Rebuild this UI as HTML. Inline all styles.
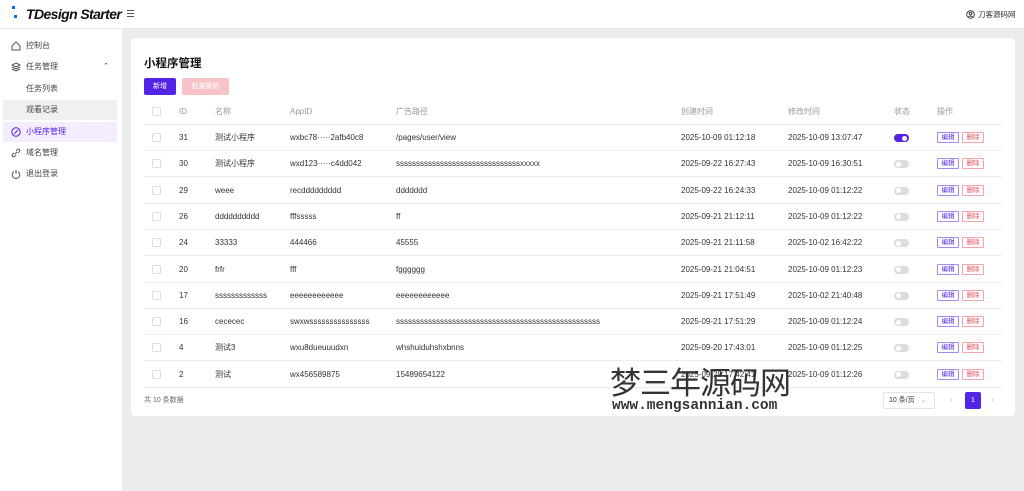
<!DOCTYPE html>
<html><head><meta charset="utf-8"><style>
*{box-sizing:border-box;margin:0;padding:0}
body{width:1024px;height:491px;overflow:hidden;background:#ececec;font-family:"Liberation Sans","Noto Sans CJK SC",sans-serif;font-size:8px;color:#333;position:relative}
.hdr{position:absolute;left:0;top:0;width:1024px;height:29px;background:#fff;border-bottom:1px solid #e7e7e7}
.logo{position:absolute;left:26px;top:6px;font-size:14px;line-height:16px;font-style:italic;font-weight:bold;color:#111;letter-spacing:-0.6px}
.dot{position:absolute;width:3px;height:3px;background:#0a6cff}
.side{position:absolute;left:0;top:29px;width:122px;height:462px;background:#fff}
.mi{position:absolute;left:3px;width:114px;height:20px;line-height:20px;padding-left:23px;font-size:8px;color:#444}
.mi svg{position:absolute;left:8px;top:5px}
.card{position:absolute;left:131px;top:38px;width:884px;height:378px;background:#fff;border-radius:4px}
.cell{position:absolute;font-size:8px;line-height:10px;height:10px;color:#333;white-space:nowrap}
.th{color:#999}
.line{position:absolute;left:144px;width:858px;height:1px;background:#ececec}
.cb{position:absolute;left:152px;width:9px;height:9px;border:1px solid #ddd;border-radius:2px}
.btn{position:absolute;height:11px;width:22px;font-size:6.5px;line-height:9px;text-align:center;border:1px solid;border-radius:1px}
.sw{position:absolute;left:894px;width:15px;height:8px;border-radius:4px;background:#ddd}
.sw i{position:absolute;top:1.5px;left:2px;width:5px;height:5px;border-radius:50%;background:#fff}
</style></head><body>
<div class="hdr">
<div class="dot" style="left:12px;top:6px"></div><div class="dot" style="left:14px;top:15px"></div>
<div class="logo">TDesign Starter</div>
<div style="position:absolute;left:127px;top:10px;width:7px;height:1px;background:#555;box-shadow:0 3px 0 #555,0 6px 0 #555"></div>
<svg style="position:absolute;left:966px;top:10px" width="9" height="9" viewBox="0 0 10 10"><circle cx="5" cy="5" r="4.2" fill="none" stroke="#333"/><circle cx="5" cy="4" r="1.5" fill="none" stroke="#333"/><path d="M2.3 8 Q5 5.5 7.7 8" fill="none" stroke="#333"/></svg>
<div class="cell" style="left:978px;top:10px;font-size:7.5px">刀客源码网</div>
</div>
<div class="side">
<div class="mi" style="top:7px"><svg width="10" height="10" viewBox="0 0 10 10"><path d="M1 5 5 1 9 5V9H1Z" fill="none" stroke="#555"/></svg>控制台</div>
<div class="mi" style="top:28px"><svg width="10" height="10" viewBox="0 0 10 10"><path d="M5 1 9 3 5 5 1 3Z M1 5 5 7 9 5 M1 7 5 9 9 7" fill="none" stroke="#555"/></svg>任务管理<span style="position:absolute;right:8px;top:0;font-size:7px">⌃</span></div>
<div class="mi" style="top:50px">任务列表</div>
<div class="mi" style="top:71px;background:#f0f0f0">观看记录</div>
<div class="mi" style="top:93px;background:#f3edff;color:#5323e6"><svg width="10" height="10" viewBox="0 0 10 10"><circle cx="5" cy="5" r="4.2" fill="none" stroke="#5323e6"/><path d="M3 7 7 3" stroke="#5323e6"/></svg>小程序管理</div>
<div class="mi" style="top:114px"><svg width="10" height="10" viewBox="0 0 10 10"><path d="M4 6 6 4 M3 5 1.5 6.5a1.4 1.4 0 0 0 2 2L5 7 M5 3 6.5 1.5a1.4 1.4 0 0 1 2 2L7 5" fill="none" stroke="#555"/></svg>域名管理</div>
<div class="mi" style="top:135px"><svg width="10" height="10" viewBox="0 0 10 10"><path d="M3 2.5A3.8 3.8 0 1 0 7 2.5M5 1V5" fill="none" stroke="#555"/></svg>退出登录</div>
</div>
<div class="card"></div>
<div class="cell" style="left:144px;top:57px;font-size:11.5px;line-height:14px;height:14px;font-weight:bold;color:#111">小程序管理</div>
<div style="position:absolute;left:144px;top:78px;width:32px;height:17px;background:#5323e6;border-radius:2px;color:#fff;font-size:7px;text-align:center;line-height:17px">新增</div>
<div style="position:absolute;left:182px;top:78px;width:47px;height:17px;background:#f8c3c8;border-radius:2px;color:#fff;font-size:7px;text-align:center;line-height:17px">批量删除</div>
<div id="t"></div>
<div class="cell" style="left:144px;top:396px;color:#666;font-size:7px">共 10 条数据</div>
<div style="position:absolute;left:883px;top:392px;width:52px;height:17px;border:1px solid #e4e4e4;border-radius:2px;font-size:7px;line-height:15px;padding-left:5px">10 条/页 <span style="color:#aaa;margin-left:4px">⌄</span></div>
<div class="cell" style="left:950px;top:395px;color:#bbb">‹</div>
<div style="position:absolute;left:965px;top:392px;width:16px;height:17px;background:#5323e6;border-radius:2px;color:#fff;font-size:7px;text-align:center;line-height:17px">1</div>
<div class="cell" style="left:991px;top:395px;color:#bbb">›</div>
<div style="position:absolute;left:610px;top:398px;width:175px;height:17px;background:rgba(255,255,255,.7)"></div>
<div class="cell" style="left:610px;top:364px;height:34px;line-height:34px;font-size:31px;color:#333;font-family:'Noto Sans CJK SC',sans-serif;letter-spacing:-1px">梦三年源码网</div>
<div class="cell" style="left:612px;top:398px;height:17px;line-height:17px;font-size:14.5px;font-family:'Liberation Mono',monospace;font-weight:bold;color:#333">www.mengsannian.com</div>
<script>
const rows=[["31","测试小程序","wxbc78·····2afb40c8","/pages/user/view","2025-10-09 01:12:18","2025-10-09 13:07:47",1],
["30","测试小程序","wxd123·····c4dd042","sssssssssssssssssssssssssssssssxxxxx","2025-09-22 16:27:43","2025-10-09 16:30:51"],
["29","weee","recddddddddd","ddddddd","2025-09-22 16:24:33","2025-10-09 01:12:22"],
["26","dddddddddd","fffsssss","ff","2025-09-21 21:12:11","2025-10-09 01:12:22"],
["24","33333","444466","45555","2025-09-21 21:11:58","2025-10-02 16:42:22"],
["20","frfr","fff","fgggggg","2025-09-21 21:04:51","2025-10-09 01:12:23"],
["17","sssssssssssss","eeeeeeeeeeee","eeeeeeeeeeee","2025-09-21 17:51:49","2025-10-02 21:40:48"],
["16","cececec","swxwsssssssssssssss","sssssssssssssssssssssssssssssssssssssssssssssssssss","2025-09-21 17:51:29","2025-10-09 01:12:24"],
["4","测试3","wxu8dueuuudxn","whshuiduhshxbnns","2025-09-20 17:43:01","2025-10-09 01:12:25"],
["2","测试","wx456589875","15489654122","2025-09-20 17:42:41","2025-10-09 01:12:26"]];
const X=[179,215,290,396,681,788];
let h='';
const hd=["ID","名称","AppID","广告路径","创建时间","修改时间"];
h+='<div class="cb" style="top:107px"></div>';
hd.forEach((t,i)=>h+=`<div class="cell th" style="left:${X[i]}px;top:107px">${t}</div>`);
h+='<div class="cell th" style="left:894px;top:107px">状态</div><div class="cell th" style="left:937px;top:107px">操作</div>';
h+='<div class="line" style="top:124px"></div>';
rows.forEach((r,k)=>{const y=133+k*26.3;
h+=`<div class="cb" style="top:${y}px"></div>`;
for(let i=0;i<6;i++)h+=`<div class="cell" style="left:${X[i]}px;top:${y}px">${r[i]}</div>`;
h+=`<div class="sw" style="top:${y+1}px;${r[6]?'background:#5323e6':''}"><i style="${r[6]?'left:8px':''}"></i></div>`;
h+=`<div class="btn" style="left:937px;top:${y-1}px;color:#5323e6;border-color:#a78bf5">编辑</div><div class="btn" style="left:962px;top:${y-1}px;color:#e34d59;border-color:#f3a5ab">删除</div>`;
h+=`<div class="line" style="top:${y+17}px"></div>`;});
document.getElementById('t').innerHTML=h;
</script>
</body></html>
